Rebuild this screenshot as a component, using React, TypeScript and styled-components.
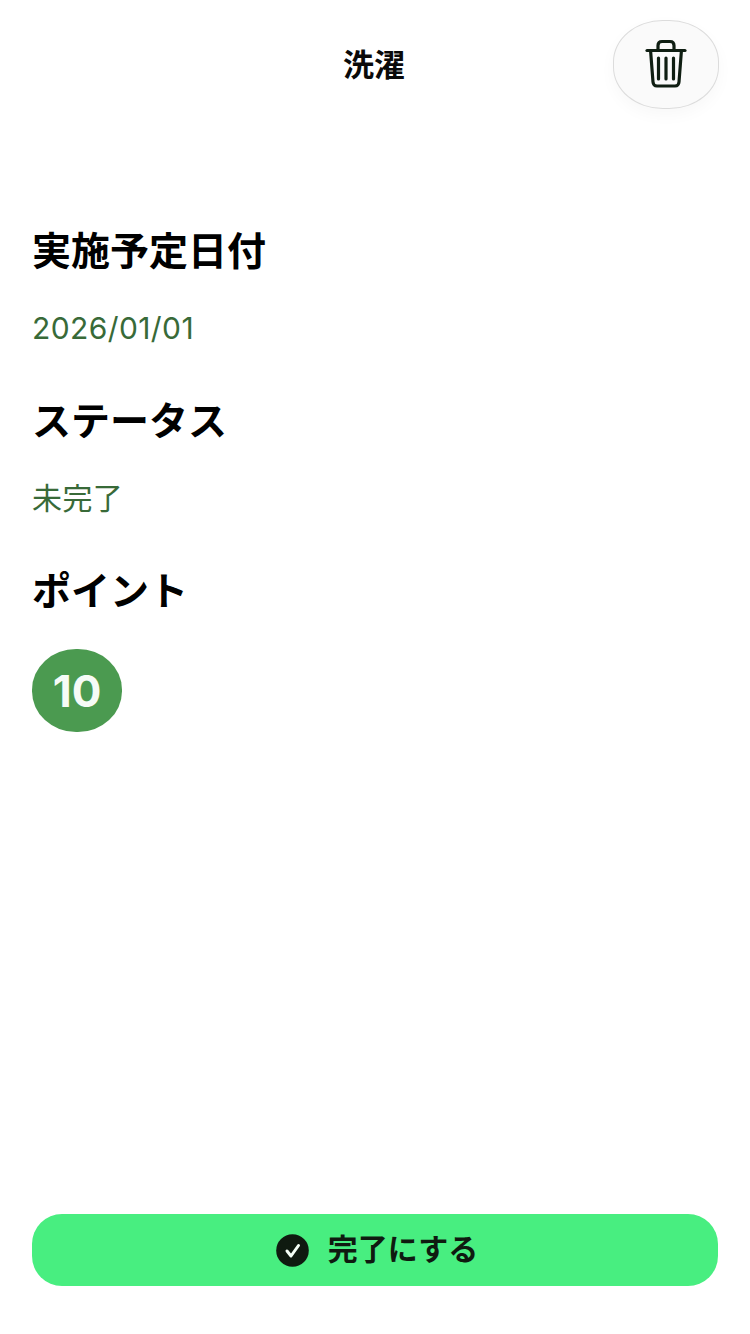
import React from "react";
import styled, { createGlobalStyle } from "styled-components";

const Global = createGlobalStyle`
  html, body { margin: 0; padding: 0; background: #fff; }
  body { font-family: Inter, "Noto Sans CJK JP", sans-serif; }
`;

const Page = styled.div`
  width: 750px;
  height: 1334px;
  box-sizing: border-box;
  display: flex;
  flex-direction: column;
  padding: 20px 32px 48px;
`;

const Header = styled.header`
  position: relative;
  height: 89px;
  display: flex;
  align-items: flex-start;
  justify-content: center;
`;

const Title = styled.h1`
  margin: 0;
  padding-top: 27px;
  padding-right: 2px;
  font-size: 31px;
  line-height: 36px;
  font-weight: 700;
  color: #0a0a0a;
`;

const TrashButton = styled.button`
  position: absolute;
  right: -1px;
  top: 0;
  width: 106px;
  height: 89px;
  border-radius: 47%;
  border: 1px solid #dcdcdc;
  background: #fafafa;
  box-shadow: 0 6px 16px rgba(0, 0, 0, 0.03);
  display: flex;
  align-items: center;
  justify-content: center;
  padding: 0;
`;

const Main = styled.main`
  flex: 1;
  display: flex;
  flex-direction: column;
  padding-top: 118px;
`;

const Label = styled.h2`
  margin: 0;
  height: 48px;
  font-size: 39px;
  line-height: 48px;
  font-weight: 700;
  color: #000;
`;

const Value = styled.p`
  margin: 32px 0 48px;
  height: 42px;
  font-size: 30px;
  line-height: 42px;
  letter-spacing: 0.4px;
  color: #386a38;
`;

const Points = styled.div`
  margin-top: 34px;
  width: 90px;
  height: 83px;
  border-radius: 49%;
  background: #4b9a50;
  color: #f6fbf6;
  font-size: 44px;
  font-weight: 700;
  display: flex;
  align-items: center;
  justify-content: center;
`;

const CompleteButton = styled.button`
  width: 686px;
  height: 72px;
  border: none;
  border-radius: 30px;
  background: #48ee80;
  display: flex;
  align-items: center;
  justify-content: center;
  gap: 19px;
  padding: 0 0 0 4px;
  color: #0f1a10;
  font-family: inherit;
  font-size: 30px;
  line-height: 68px;
  font-weight: 700;
`;

const ButtonLabel = styled.span`
  padding-bottom: 2px;
`;

const TrashIcon = () => (
  <svg width="44" height="52" viewBox="0 0 44 52" fill="none" stroke="#0f1e12" strokeWidth="3.2" strokeLinecap="round" strokeLinejoin="round">
    <path d="M3 11.5h38" />
    <path d="M14 11V6.5C14 4 15.5 2.5 18 2.5h8c2.5 0 4 1.5 4 4V11" />
    <path d="M6.6 12l2.4 31c.2 2.7 1.6 4 4 4h18c2.4 0 3.8-1.3 4-4l2.4-31" />
    <path d="M14.5 19v21M22 19v21M29.5 19v21" />
  </svg>
);

const CheckIcon = () => (
  <svg width="33" height="33" viewBox="0 0 33 33">
    <circle cx="16.5" cy="16.5" r="16.3" fill="#0f1a10" />
    <path d="M11 17l4 5L22.5 11.5" fill="none" stroke="#f4fff6" strokeWidth="3" strokeLinecap="round" strokeLinejoin="round" />
  </svg>
);

export default function App() {
  return (
    <Page>
      <Global />
      <Header>
        <Title>洗濯</Title>
        <TrashButton aria-label="削除"><TrashIcon /></TrashButton>
      </Header>
      <Main>
        <Label>実施予定日付</Label>
        <Value>2026/01/01</Value>
        <Label>ステータス</Label>
        <Value>未完了</Value>
        <Label>ポイント</Label>
        <Points>10</Points>
      </Main>
      <CompleteButton><CheckIcon /><ButtonLabel>完了にする</ButtonLabel></CompleteButton>
    </Page>
  );
}
